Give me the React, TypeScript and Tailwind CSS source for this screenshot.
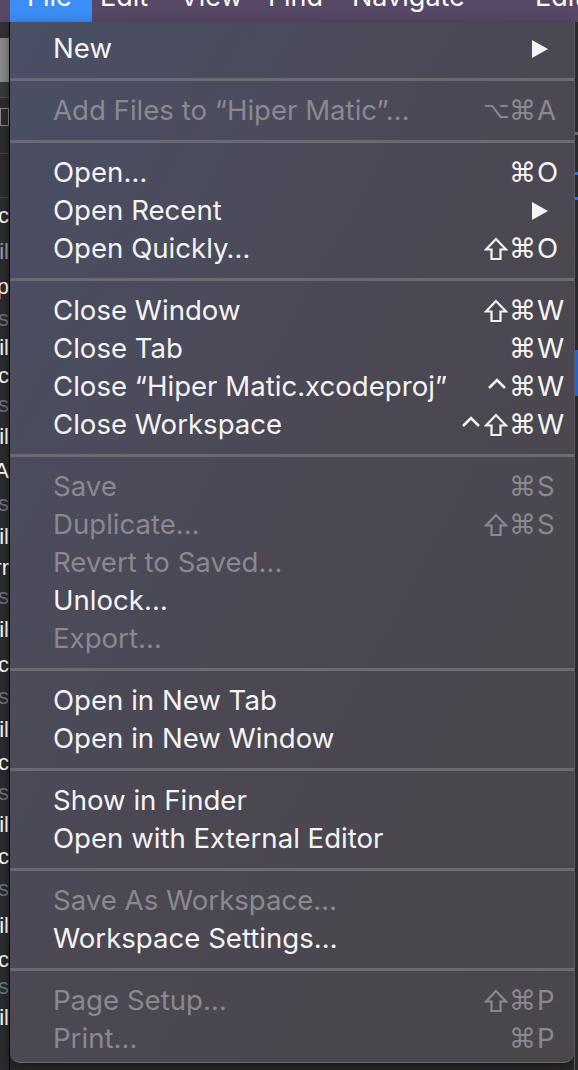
import { Fragment } from "react";

type Item = {
  label: string;
  mods?: string[];
  keyChar?: string;
  sub?: boolean;
  disabled?: boolean;
};

const sections: Item[][] = [
  [{ label: "New", sub: true }],
  [{ label: "Add Files to “Hiper Matic”…", mods: ["opt", "cmd"], keyChar: "A", disabled: true }],
  [
    { label: "Open…", mods: ["cmd"], keyChar: "O" },
    { label: "Open Recent", sub: true },
    { label: "Open Quickly…", mods: ["shift", "cmd"], keyChar: "O" },
  ],
  [
    { label: "Close Window", mods: ["shift", "cmd"], keyChar: "W" },
    { label: "Close Tab", mods: ["cmd"], keyChar: "W" },
    { label: "Close “Hiper Matic.xcodeproj”", mods: ["ctrl", "cmd"], keyChar: "W" },
    { label: "Close Workspace", mods: ["ctrl", "shift", "cmd"], keyChar: "W" },
  ],
  [
    { label: "Save", mods: ["cmd"], keyChar: "S", disabled: true },
    { label: "Duplicate…", mods: ["shift", "cmd"], keyChar: "S", disabled: true },
    { label: "Revert to Saved…", disabled: true },
    { label: "Unlock…" },
    { label: "Export…", disabled: true },
  ],
  [{ label: "Open in New Tab" }, { label: "Open in New Window" }],
  [{ label: "Show in Finder" }, { label: "Open with External Editor" }],
  [{ label: "Save As Workspace…", disabled: true }, { label: "Workspace Settings…" }],
  [
    { label: "Page Setup…", mods: ["shift", "cmd"], keyChar: "P", disabled: true },
    { label: "Print…", mods: ["cmd"], keyChar: "P", disabled: true },
  ],
];

// bits of the Xcode navigator that peek out left of the menu
const sideRows: [string, string, number][] = [
  ["Abc", "text-white", 36],
  ["Fil", "text-gray-400", 36],
  ["App", "text-white", 34],
  ["Res", "text-gray-500", 30],
  ["Fil", "text-white", 28],
  ["Abc", "text-white", 28],
  ["Res", "text-gray-500", 30],
  ["Fil", "text-white", 34],
  ["AppA", "text-white", 34],
  ["Res", "text-gray-500", 32],
  ["Fil", "text-white", 34],
  ["Err", "text-white", 28],
  ["Res", "text-gray-500", 30],
  ["Fil", "text-white", 36],
  ["Abc", "text-white", 34],
  ["Res", "text-gray-500", 30],
  ["Fil", "text-white", 36],
  ["Abc", "text-white", 30],
  ["Res", "text-gray-500", 30],
  ["Fil", "text-white", 34],
  ["Abc", "text-white", 30],
  ["Res", "text-gray-500", 34],
  ["Fil", "text-white", 40],
  ["Inc", "text-white", 28],
  ["Res", "text-gray-500", 26],
  ["Fil", "text-white", 36],
];

function Arrow() {
  return (
    <svg width="18" height="18" viewBox="0 0 18 18" className="mr-[25px]">
      <polygon points="1,0 17,9 1,18" fill="#f4f4f4" />
    </svg>
  );
}

function ShiftIcon() {
  return (
    <svg width="24" height="24" viewBox="0 0 24 24" fill="none" stroke="currentColor" strokeWidth="2.2" strokeLinejoin="miter">
      <path d="M12 2 L2 12.5 H7.5 V22 H16.5 V12.5 H22 Z" />
    </svg>
  );
}

function CtrlIcon() {
  return (
    <svg width="24" height="24" viewBox="0 0 24 24" fill="none" stroke="currentColor" strokeWidth="2.6">
      <path d="M4 13 L12 5 L20 13" />
    </svg>
  );
}

function Mod({ m }: { m: string }) {
  if (m === "shift")
    return (
      <span className="flex w-[26px] justify-center">
        <ShiftIcon />
      </span>
    );
  if (m === "ctrl")
    return (
      <span className="flex w-[24px] justify-center">
        <CtrlIcon />
      </span>
    );
  return (
    <span
      className={`w-[26px] text-center leading-none ${m === "cmd" ? "text-[27px]" : "text-[23px]"}`}
      style={{ fontFamily: "'DejaVu Sans', sans-serif" }}
    >
      {m === "cmd" ? "⌘" : "⌥"}
    </span>
  );
}

function Row({ item }: { item: Item }) {
  const color = item.disabled ? "text-[#8a8890]" : "text-[#f4f4f5]";
  return (
    <div className={`flex h-[38px] items-center pl-[43px] pt-[1px] ${color}`}>
      <span className="flex-1 text-[27.6px] leading-none whitespace-nowrap">{item.label}</span>
      {item.sub && <Arrow />}
      {item.keyChar && (
        <div className="flex items-center pr-[7px]">
          {item.mods?.map((m, i) => <Mod key={i} m={m} />)}
          <span className="w-[32px] pl-[2px] text-[27.6px] leading-none">{item.keyChar}</span>
        </div>
      )}
    </div>
  );
}

export default function App() {
  return (
    <div
      className="flex h-[1070px] w-[578px] flex-col overflow-hidden bg-[#2b2a2d]"
      style={{ fontFamily: "Inter, 'Noto Sans', sans-serif" }}
    >
      {/* menu bar, mostly scrolled off the top */}
      <div className="flex h-[22px] shrink-0 items-start overflow-hidden bg-[#574866] text-[27px] leading-none whitespace-nowrap text-white">
        <div className="ml-[10px] -mt-[17px] h-[39px] w-[82px] shrink-0 bg-[#3a8ef6] pl-[17px]">File</div>
        <div className="-mt-[17px] flex shrink-0">
          <span className="w-[88px] shrink-0 pl-[8px]">Edit</span>
          <span className="w-[88px] shrink-0">View</span>
          <span className="w-[84px] shrink-0">Find</span>
          <span className="w-[183px] shrink-0">Navigate</span>
          <span className="shrink-0">Editor</span>
        </div>
      </div>

      <div className="flex flex-1">
        {/* left navigator strip */}
        <div className="flex w-[10px] shrink-0 flex-col overflow-hidden border-r border-black bg-[#2c2b2e]">
          <div className="h-[16px] bg-[#333235]" />
          <div className="h-[44px] bg-[#8c8c90]" />
          <div className="h-[16px] border-b border-[#505052] bg-[#3a393c]" />
          <div className="mt-[10px] h-[18px] border border-[#8a8a8a]" />
          <div className="h-[28px] border-b border-[#48474a]" />
          <div className="h-[44px] border-b border-[#48474a]" />
          {sideRows.map(([t, c, h], i) => (
            <div
              key={i}
              className={`flex items-center justify-end text-[22px] leading-none ${c}`}
              style={{ height: h, fontFamily: "'Liberation Sans', sans-serif" }}
            >
              <span className="whitespace-nowrap">{t}</span>
            </div>
          ))}
        </div>

        {/* the File menu */}
        <div className="flex h-[1041px] w-[564px] shrink-0 flex-col rounded-b-[10px] border-b border-[#6a6870] bg-linear-to-br from-[#4a4f66] via-[#4b4853] to-[#4a464c] pt-[7px] pb-[5px] shadow-[0_4px_12px_rgba(0,0,0,0.5)]">
          {sections.map((sec, si) => (
            <Fragment key={si}>
              {si > 0 && (
                <div className="flex h-[24px] items-center">
                  <div className="h-[3px] w-full bg-[#6b6972]" />
                </div>
              )}
              {sec.map((it) => (
                <Row key={it.label} item={it} />
              ))}
            </Fragment>
          ))}
        </div>

        {/* right edge of the window behind */}
        <div className="flex w-[4px] shrink-0 flex-col border-l border-[#5a595e] bg-[#2a292c]">
          <div className="h-[110px]" />
          <div className="h-[3px] bg-[#6a6a6e]" />
          <div className="h-[37px]" />
          <div className="h-[3px] bg-[#2f6fe0]" />
          <div className="h-[22px]" />
          <div className="h-[3px] bg-[#2f6fe0]" />
          <div className="h-[150px]" />
          <div className="h-[46px] bg-[#2862d0]" />
        </div>
      </div>
    </div>
  );
}
